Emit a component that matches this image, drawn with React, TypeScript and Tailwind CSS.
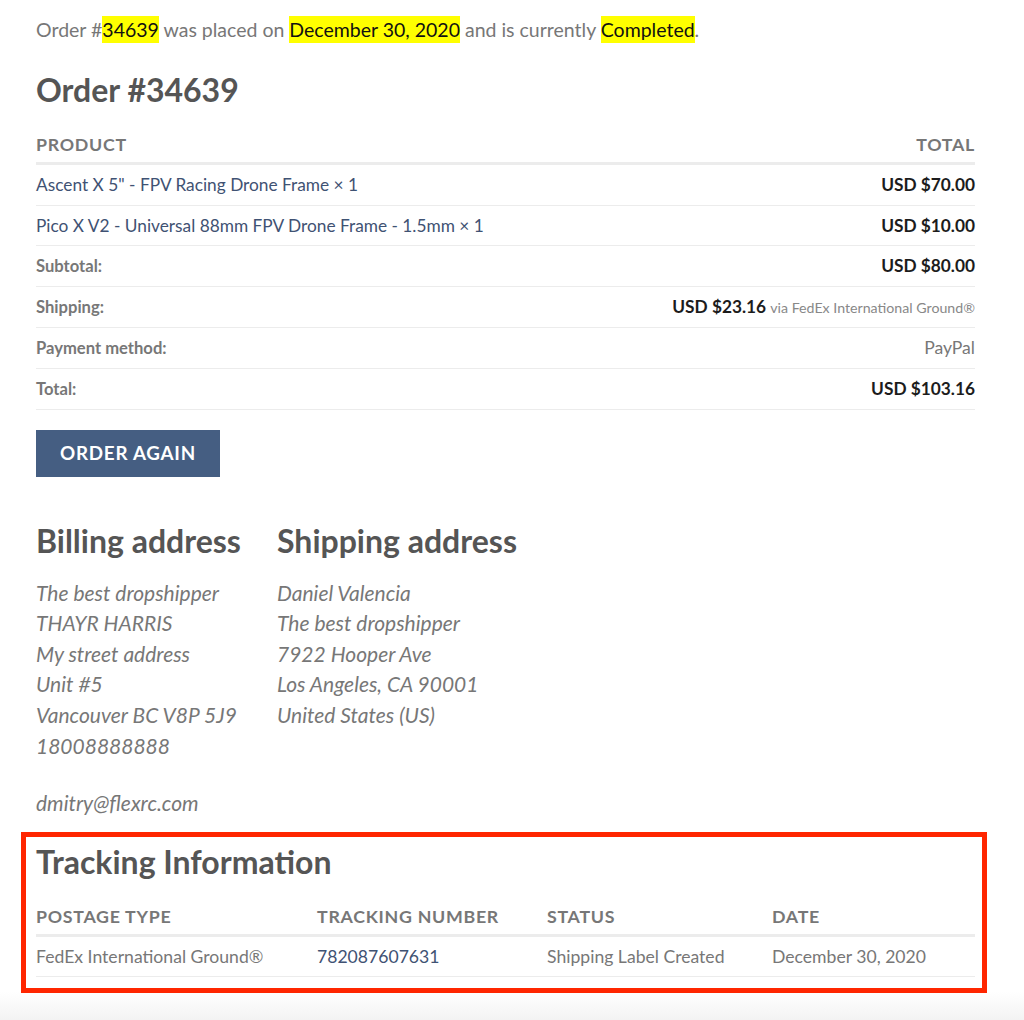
import React from "react";

const font = { fontFamily: "Lato, 'Open Sans', sans-serif" };

function Mark({ children }: { children: React.ReactNode }) {
  return <mark className="bg-[#ffff00] text-[#111] py-[2px]">{children}</mark>;
}

const th = "py-[9px] pb-[8px] leading-[20px] font-bold text-[17.8px] tracking-[0.04em] text-[#777]";
const td = "py-[10px] leading-[19.6px]";
const lab = "py-[10px] leading-[19.6px] text-left text-[16.6px] font-bold text-[#777] align-middle";

export default function App() {
  const items = [
    { name: 'Ascent X 5" - FPV Racing Drone Frame', total: "USD $70.00" },
    { name: "Pico X V2 - Universal 88mm FPV Drone Frame - 1.5mm", total: "USD $10.00" },
  ];
  return (
    <div className="min-h-[1020px] bg-white flex flex-col" style={font}>
      <div className="px-[36px] pt-[15px] pb-[15px] w-[1011px] text-[#777]">
        <p className="text-[19.5px] leading-[30px]">
          Order #<Mark>34639</Mark> was placed on <Mark>December 30, 2020</Mark> and is currently{" "}
          <Mark>Completed</Mark>.
        </p>

        <h2 className="mt-[27px] text-[32px] leading-[36px] font-bold text-[#555]">Order #34639</h2>

        <table className="w-full mt-[17px] border-collapse">
          <thead>
            <tr className="border-b-[3px] border-[#ececec]">
              <th className={`text-left ${th}`}>PRODUCT</th>
              <th className={`text-right ${th}`}>TOTAL</th>
            </tr>
          </thead>
          <tbody>
            {items.map((it) => (
              <tr key={it.name} className="border-b border-[#ececec]">
                <td className={`${td} text-[17.3px] text-[#3f5273]`}>
                  {it.name} ×&nbsp;1
                </td>
                <td className={`${td} text-[17.3px] text-right font-bold text-[#1c1c1c]`}>{it.total}</td>
              </tr>
            ))}
          </tbody>
          <tfoot>
            <tr className="border-b border-[#ececec]">
              <th className={lab}><span className="relative top-[1px]">Subtotal:</span></th>
              <td className={`${td} text-[17.3px] text-right font-bold text-[#1c1c1c]`}>USD $80.00</td>
            </tr>
            <tr className="border-b border-[#ececec]">
              <th className={lab}><span className="relative top-[1px]">Shipping:</span></th>
              <td className={`${td} text-right`}>
                <span className="text-[17.3px] font-bold text-[#1c1c1c]">USD $23.16</span>{" "}
                <span className="text-[14.2px] text-[#888]">via FedEx International Ground®</span>
              </td>
            </tr>
            <tr className="border-b border-[#ececec]">
              <th className={lab}><span className="relative top-[1px]">Payment method:</span></th>
              <td className={`${td} text-[17.6px] text-right text-[#777]`}>PayPal</td>
            </tr>
            <tr className="border-b border-[#ececec]">
              <th className={lab}><span className="relative top-[1px]">Total:</span></th>
              <td className={`${td} text-[17.3px] text-right font-bold text-[#1c1c1c]`}>USD $103.16</td>
            </tr>
          </tfoot>
        </table>

        <button className="mt-[20px] w-[184px] h-[47px] bg-[#455e82] text-white text-[18.8px] font-bold tracking-[0.04em]">
          ORDER AGAIN
        </button>

        <div className="mt-[46px] flex">
          <div className="w-[241px]">
            <h2 className="text-[32px] leading-[36px] font-bold text-[#555]">Billing address</h2>
            <address className="mt-[19px] italic text-[21px] leading-[30.6px] text-[#777]">
              The best dropshipper<br />
              THAYR HARRIS<br />
              My street address<br />
              Unit #5<br />
              Vancouver BC V8P 5J9<br />
              18008888888
            </address>
            <p className="mt-[27px] italic text-[21px] leading-[30.6px] text-[#777]">dmitry@flexrc.com</p>
          </div>
          <div>
            <h2 className="text-[32px] leading-[36px] font-bold text-[#555]">Shipping address</h2>
            <address className="mt-[19px] italic text-[21px] leading-[30.6px] text-[#777]">
              Daniel Valencia<br />
              The best dropshipper<br />
              7922 Hooper Ave<br />
              Los Angeles, CA 90001<br />
              United States (US)
            </address>
          </div>
        </div>

        <div className="relative mt-[25px]">
          <div className="absolute left-[-15px] right-[-12px] top-[-12px] bottom-[-16px] border-[5px] border-[#ff2600] pointer-events-none" />
          <h2 className="text-[32px] leading-[36px] font-bold text-[#555]">Tracking Information</h2>
          <table className="w-full mt-[17px] border-collapse">
            <thead>
              <tr className="border-b-[3px] border-[#ececec]">
                <th className={`w-[281px] text-left ${th}`}>POSTAGE TYPE</th>
                <th className={`w-[230px] text-left ${th}`}>TRACKING NUMBER</th>
                <th className={`w-[225px] text-left ${th}`}>STATUS</th>
                <th className={`text-left ${th}`}>DATE</th>
              </tr>
            </thead>
            <tbody>
              <tr className="border-b border-[#ececec] text-[17.6px]">
                <td className={`${td} text-[#777]`}>FedEx International Ground®</td>
                <td className={`${td} text-[#3f5273]`}>782087607631</td>
                <td className={`${td} text-[#777]`}>Shipping Label Created</td>
                <td className={`${td} text-[#777]`}>December 30, 2020</td>
              </tr>
            </tbody>
          </table>
        </div>
      </div>
      <div className="flex-1 bg-gradient-to-b from-white to-[#f3f3f3]" />
    </div>
  );
}
